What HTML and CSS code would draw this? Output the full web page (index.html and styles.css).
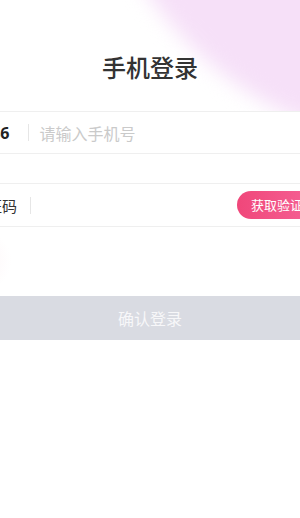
FILE: index.html
```html
<!DOCTYPE html>
<html lang="zh-CN">
<head>
<meta charset="utf-8">
<title>手机登录</title>
<link rel="stylesheet" href="styles.css">
</head>
<body>
<div class="page">
  <div class="blob"></div>
  <div class="blob-left"></div>
  <h1 class="title">手机登录</h1>
  <div class="form">
    <div class="row row-phone">
      <span class="prefix">+86</span>
      <span class="divider"></span>
      <input class="field" type="text" placeholder="请输入手机号">
    </div>
    <div class="row row-code">
      <span class="label">验证码</span>
      <span class="divider"></span>
      <input class="field" type="text">
      <button class="send" type="button">获取验证码</button>
    </div>
  </div>
  <button class="submit" type="button">确认登录</button>
</div>
</body>
</html>
```

FILE: styles.css
```css
html, body {
  margin: 0;
  padding: 0;
  background: #ffffff;
}
body {
  width: 300px;
  height: 518px;
  overflow: hidden;
  font-family: "Noto Sans CJK SC", "Noto Sans", sans-serif;
}
.page {
  position: relative;
  width: 380px;
  margin-left: -40px;
  padding-top: 51px;
  height: 467px;
}
.blob {
  position: absolute;
  left: 128px;
  top: -552px;
  width: 700px;
  height: 700px;
  border-radius: 50%;
  background: #f6e0f8;
  filter: blur(10px);
  z-index: 0;
}
.blob-left {
  position: absolute;
  left: 0;
  top: 226px;
  width: 52px;
  height: 70px;
  background: radial-gradient(ellipse at 20% 50%, #fcf2f5 0%, rgba(252,242,245,0) 70%);
  z-index: 0;
}
.title {
  position: relative;
  z-index: 1;
  margin: 0;
  font-size: 24px;
  line-height: 32px;
  font-weight: 500;
  color: #333333;
  text-align: center;
}
.form {
  position: relative;
  z-index: 1;
  margin-top: 28px;
  display: flex;
  flex-direction: column;
  gap: 29px;
}
.row {
  display: flex;
  align-items: center;
  height: 41px;
  background: #ffffff;
  border-top: 1px solid #efefef;
  border-bottom: 1px solid #efefef;
}
.row-phone {
  padding-left: 22px;
}
.row-code {
  height: 42px;
  padding-left: 12px;
  padding-right: 9px;
}
.prefix {
  font-family: "Noto Sans", sans-serif;
  font-weight: 700;
  font-size: 16px;
  color: #222222;
  margin-right: 19px;
}
.label {
  font-size: 15px;
  color: #333333;
  margin-right: 13px;
}
.divider {
  width: 1px;
  height: 17px;
  background: #e6e6e6;
  flex: none;
}
.field {
  flex: 1;
  min-width: 0;
  margin-left: 10px;
  border: none;
  outline: none;
  padding: 0;
  background: transparent;
  font-family: "Noto Sans CJK SC", sans-serif;
  font-size: 16px;
  color: #333333;
}
.field::placeholder {
  color: #cacaca;
}
.send {
  flex: none;
  height: 28px;
  padding: 0 15px 0 14px;
  border: none;
  border-radius: 14px;
  background: linear-gradient(90deg, #f0477a, #f6669a);
  color: #ffffff;
  font-family: "Noto Sans CJK SC", sans-serif;
  font-size: 13px;
  line-height: 28px;
  white-space: nowrap;
}
.submit {
  position: relative;
  z-index: 1;
  display: block;
  width: 100%;
  height: 44px;
  margin-top: 69px;
  border: none;
  padding: 0;
  background: #d9dbe2;
  color: #f7f7f9;
  font-family: "Noto Sans CJK SC", sans-serif;
  font-size: 16px;
}
```
